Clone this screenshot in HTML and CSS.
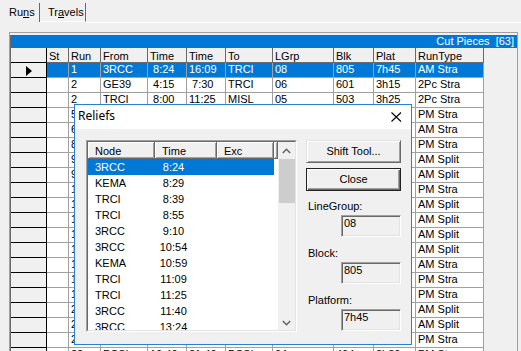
FILE: index.html
```html
<!DOCTYPE html>
<html>
<head>
<meta charset="utf-8">
<link rel="stylesheet" href="styles.css">
</head>
<body>
<div class="app">
  <div class="tabs">
    <div class="tab sel">Ru<u>n</u>s</div>
    <div class="tab">Tr<u>a</u>vels</div>
    <div class="tab-fill"></div>
  </div>
  <div class="frame">
    <div class="grid">
      <div class="cap">Cut Pieces&nbsp;&nbsp;[63]</div>
      <div class="gr gh">
        <div class="rh"></div><div class="st">St</div><div class="run">Run</div><div class="from">From</div><div class="t1">Time</div><div class="t2">Time</div><div class="to">To</div><div class="lg">LGrp</div><div class="blk">Blk</div><div class="plat">Plat</div><div class="rt">RunType</div>
      </div>
      <div class="gr sel">
        <div class="rh"><svg width="7" height="10" viewBox="0 0 7 10"><polygon points="0,0 6,5 0,10" fill="#000"/></svg></div><div class="st"></div><div class="run">1</div><div class="from">3RCC</div><div class="t1">&nbsp;8:24</div><div class="t2">16:09</div><div class="to">TRCI</div><div class="lg">08</div><div class="blk">805</div><div class="plat">7h45</div><div class="rt">AM Stra</div>
      </div>
      <div class="gr"><div class="rh"></div><div class="st"></div><div class="run">2</div><div class="from">GE39</div><div class="t1">&nbsp;4:15</div><div class="t2">&nbsp;7:30</div><div class="to">TRCI</div><div class="lg">06</div><div class="blk">601</div><div class="plat">3h15</div><div class="rt">2Pc Stra</div></div>
      <div class="gr"><div class="rh"></div><div class="st"></div><div class="run">2</div><div class="from">TRCI</div><div class="t1">&nbsp;8:00</div><div class="t2">11:25</div><div class="to">MISL</div><div class="lg">05</div><div class="blk">503</div><div class="plat">3h25</div><div class="rt">2Pc Stra</div></div>
      <div class="gr"><div class="rh"></div><div class="st"></div><div class="run">5</div><div class="from">TRCI</div><div class="t1">14:10</div><div class="t2">22:05</div><div class="to">TRCI</div><div class="lg">08</div><div class="blk">812</div><div class="plat">7h55</div><div class="rt">PM Stra</div></div>
      <div class="gr"><div class="rh"></div><div class="st"></div><div class="run">6</div><div class="from">3RCC</div><div class="t1">&nbsp;5:02</div><div class="t2">13:00</div><div class="to">3RCC</div><div class="lg">06</div><div class="blk">604</div><div class="plat">7h58</div><div class="rt">AM Stra</div></div>
      <div class="gr"><div class="rh"></div><div class="st"></div><div class="run">8</div><div class="from">KEMA</div><div class="t1">14:32</div><div class="t2">22:30</div><div class="to">TRCI</div><div class="lg">05</div><div class="blk">507</div><div class="plat">7h58</div><div class="rt">PM Stra</div></div>
      <div class="gr"><div class="rh"></div><div class="st"></div><div class="run">9</div><div class="from">3RCC</div><div class="t1">&nbsp;5:40</div><div class="t2">18:10</div><div class="to">KEMA</div><div class="lg">08</div><div class="blk">803</div><div class="plat">7h50</div><div class="rt">AM Split</div></div>
      <div class="gr"><div class="rh"></div><div class="st"></div><div class="run">9</div><div class="from">TRCI</div><div class="t1">&nbsp;6:12</div><div class="t2">17:45</div><div class="to">TRCI</div><div class="lg">06</div><div class="blk">602</div><div class="plat">7h40</div><div class="rt">AM Split</div></div>
      <div class="gr"><div class="rh"></div><div class="st"></div><div class="run">10</div><div class="from">GE39</div><div class="t1">15:20</div><div class="t2">23:18</div><div class="to">TRCI</div><div class="lg">05</div><div class="blk">505</div><div class="plat">7h58</div><div class="rt">PM Stra</div></div>
      <div class="gr"><div class="rh"></div><div class="st"></div><div class="run">11</div><div class="from">3RCC</div><div class="t1">&nbsp;6:05</div><div class="t2">18:30</div><div class="to">3RCC</div><div class="lg">08</div><div class="blk">806</div><div class="plat">7h45</div><div class="rt">AM Split</div></div>
      <div class="gr"><div class="rh"></div><div class="st"></div><div class="run">12</div><div class="from">KEMA</div><div class="t1">&nbsp;6:20</div><div class="t2">18:44</div><div class="to">KEMA</div><div class="lg">06</div><div class="blk">605</div><div class="plat">7h36</div><div class="rt">AM Split</div></div>
      <div class="gr"><div class="rh"></div><div class="st"></div><div class="run">13</div><div class="from">TRCI</div><div class="t1">&nbsp;6:35</div><div class="t2">19:02</div><div class="to">TRCI</div><div class="lg">05</div><div class="blk">506</div><div class="plat">7h42</div><div class="rt">AM Split</div></div>
      <div class="gr"><div class="rh"></div><div class="st"></div><div class="run">14</div><div class="from">3RCC</div><div class="t1">&nbsp;6:50</div><div class="t2">19:15</div><div class="to">3RCC</div><div class="lg">08</div><div class="blk">807</div><div class="plat">7h40</div><div class="rt">AM Split</div></div>
      <div class="gr"><div class="rh"></div><div class="st"></div><div class="run">15</div><div class="from">GE39</div><div class="t1">&nbsp;7:05</div><div class="t2">15:00</div><div class="to">TRCI</div><div class="lg">06</div><div class="blk">606</div><div class="plat">7h55</div><div class="rt">AM Stra</div></div>
      <div class="gr"><div class="rh"></div><div class="st"></div><div class="run">16</div><div class="from">TRCI</div><div class="t1">14:45</div><div class="t2">22:40</div><div class="to">3RCC</div><div class="lg">05</div><div class="blk">508</div><div class="plat">7h55</div><div class="rt">PM Stra</div></div>
      <div class="gr"><div class="rh"></div><div class="st"></div><div class="run">17</div><div class="from">KEMA</div><div class="t1">15:05</div><div class="t2">23:00</div><div class="to">KEMA</div><div class="lg">08</div><div class="blk">808</div><div class="plat">7h55</div><div class="rt">PM Stra</div></div>
      <div class="gr"><div class="rh"></div><div class="st"></div><div class="run">20</div><div class="from">3RCC</div><div class="t1">&nbsp;7:20</div><div class="t2">19:40</div><div class="to">TRCI</div><div class="lg">06</div><div class="blk">607</div><div class="plat">7h35</div><div class="rt">AM Split</div></div>
      <div class="gr"><div class="rh"></div><div class="st"></div><div class="run">21</div><div class="from">TRCI</div><div class="t1">&nbsp;7:35</div><div class="t2">19:55</div><div class="to">3RCC</div><div class="lg">05</div><div class="blk">509</div><div class="plat">7h40</div><div class="rt">AM Split</div></div>
      <div class="gr"><div class="rh"></div><div class="st"></div><div class="run">22</div><div class="from">KEMA</div><div class="t1">15:30</div><div class="t2">23:25</div><div class="to">TRCI</div><div class="lg">08</div><div class="blk">809</div><div class="plat">7h55</div><div class="rt">PM Stra</div></div>
      <div class="gr"><div class="rh"></div><div class="st"></div><div class="run">22</div><div class="from">PCSL</div><div class="t1">10:40</div><div class="t2">21:40</div><div class="to">PCSL</div><div class="lg">04</div><div class="blk">404</div><div class="plat">3h30</div><div class="rt">PM Stra</div></div>
    </div>
  </div>

  <div class="dialog">
    <div class="dlg-title">
      <span>Reliefs</span>
      <svg class="xbtn" width="11" height="10" viewBox="0 0 11 10"><path d="M0.5 0.5 L10 9.5 M10 0.5 L0.5 9.5" stroke="#000" stroke-width="1.1" fill="none"/></svg>
    </div>
    <div class="dlg-body">
      <div class="lv">
        <div class="lv-in">
          <div class="lv-main">
            <div class="lv-head">
              <div class="lh c-node">Node</div><div class="lh c-time">Time</div><div class="lh c-exc">Exc</div><div class="lh c-fill"></div>
            </div>
            <div class="lv-row sel"><span class="n">3RCC</span><span class="t">8:24</span></div>
            <div class="lv-row"><span class="n">KEMA</span><span class="t">8:29</span></div>
            <div class="lv-row"><span class="n">TRCI</span><span class="t">8:39</span></div>
            <div class="lv-row"><span class="n">TRCI</span><span class="t">8:55</span></div>
            <div class="lv-row"><span class="n">3RCC</span><span class="t">9:10</span></div>
            <div class="lv-row"><span class="n">3RCC</span><span class="t">10:54</span></div>
            <div class="lv-row"><span class="n">KEMA</span><span class="t">10:59</span></div>
            <div class="lv-row"><span class="n">TRCI</span><span class="t">11:09</span></div>
            <div class="lv-row"><span class="n">TRCI</span><span class="t">11:25</span></div>
            <div class="lv-row"><span class="n">3RCC</span><span class="t">11:40</span></div>
            <div class="lv-row"><span class="n">3RCC</span><span class="t">13:24</span></div>
            <div class="lv-row"><span class="n">KEMA</span><span class="t">13:29</span></div>
          </div>
          <div class="vscroll">
            <div class="sb-btn"><svg width="9" height="6" viewBox="0 0 9 6"><polyline points="0.8,5 4.5,1.2 8.2,5" fill="none" stroke="#606060" stroke-width="1.4"/></svg></div>
            <div class="sb-thumb"></div>
            <div class="sb-track"></div>
            <div class="sb-btn dn"><svg width="9" height="6" viewBox="0 0 9 6"><polyline points="0.8,1 4.5,4.8 8.2,1" fill="none" stroke="#606060" stroke-width="1.4"/></svg></div>
          </div>
        </div>
      </div>
      <div class="side">
        <div class="btn">Shift Tool...</div>
        <div class="btn def">Close</div>
        <div class="lbl first">LineGroup:</div>
        <div class="edit">08</div>
        <div class="lbl">Block:</div>
        <div class="edit">805</div>
        <div class="lbl">Platform:</div>
        <div class="edit">7h45</div>
      </div>
    </div>
  </div>
</div>
</body>
</html>
```

FILE: styles.css
```css
html, body {
  margin: 0;
  padding: 0;
  background: #f0f0f0;
}
body {
  font-family: "Liberation Sans", Arial, sans-serif;
  font-size: 11px;
  color: #000;
  overflow: hidden;
}
.app {
  position: relative;
  width: 521px;
  height: 351px;
  overflow: hidden;
  background: #f0f0f0;
}

/* tabs */
.tabs {
  display: flex;
  align-items: flex-start;
  height: 22px;
  padding-top: 3px;
  box-sizing: border-box;
}
.tab {
  box-sizing: border-box;
  height: 19px;
  line-height: 13px;
  padding-top: 3px;
  border-right: 1px solid #696969;
  border-bottom: 1px solid #fff;
  white-space: nowrap;
}
.tab.sel {
  width: 40px;
  padding-left: 9px;
  border-bottom: none;
}
.tab:not(.sel) {
  width: 46px;
  padding-left: 8px;
}
.tab-fill {
  flex: 1;
  height: 19px;
  border-bottom: 1px solid #fff;
}
.tab u {
  text-decoration: underline;
  text-underline-offset: 1px;
}

/* grid frame */
.frame {
  margin-top: 10px;
  margin-left: 9px;
  width: 509px;
  box-sizing: border-box;
  border: 1px solid #a0a0a0;
  border-bottom: none;
  padding-top: 2px;
  height: 400px;
}
.grid {
  border-left: 1px solid #696969;
  height: 100%;
}
.cap {
  height: 13px;
  line-height: 13px;
  background: #0078d7;
  color: #fff;
  text-align: right;
  padding-right: 3px;
  white-space: nowrap;
}
.gr {
  display: flex;
  height: 15px;
}
.gr > div {
  box-sizing: border-box;
  height: 15px;
  flex: none;
  background: #fff;
  border-right: 1px solid #a0a0a0;
  border-bottom: 1px solid #a0a0a0;
  padding-left: 2px;
  line-height: 13px;
  white-space: nowrap;
  overflow: hidden;
}
.gr > .rh {
  width: 36px;
  background: #f0f0f0;
  border-color: #000;
  padding: 0;
  display: flex;
  align-items: center;
  justify-content: center;
}
.gr > .rh svg { margin-left: 1px; margin-top: 1px; }
.gr > .st { width: 22px; }
.gr > .run { width: 32px; }
.gr > .from { width: 47px; }
.gr > .t1 { width: 39px; }
.gr > .t2 { width: 39px; }
.gr > .to { width: 47px; }
.gr > .lg { width: 61px; }
.gr > .blk { width: 40px; }
.gr > .plat { width: 42px; }
.gr > .rt { width: 68px; }

.gh > div {
  background: #f0f0f0;
  border-color: #696969;
  padding-top: 2px;
  line-height: 12px;
}
.gh > .rh { border-color: #000; }

.gr.sel > div:not(.rh) {
  background: #0078d7;
  color: #fff;
}

/* dialog */
.dialog {
  position: absolute;
  left: 74px;
  top: 104px;
  width: 338px;
  height: 241px;
  box-sizing: border-box;
  border: 1px solid #2b7fd3;
  background: #f0f0f0;
}
.dlg-title {
  height: 24px;
  background: #fff;
  display: flex;
  align-items: flex-start;
  justify-content: space-between;
  padding-left: 3px;
  font-family: "Noto Sans", "Open Sans", sans-serif;
  font-size: 12px;
  line-height: 21px;
}
.xbtn {
  margin-top: 7px;
  margin-right: 9px;
}
.dlg-body {
  display: flex;
  padding: 11px 10px 0 11px;
  gap: 9px;
}

/* list view */
.lv {
  width: 211px;
  height: 192px;
  box-sizing: border-box;
  border: 1px solid;
  border-color: #a0a0a0 #fff #fff #a0a0a0;
  flex: none;
}
.lv-in {
  height: 100%;
  box-sizing: border-box;
  border: 1px solid;
  border-color: #696969 #e3e3e3 #e3e3e3 #696969;
  background: #fff;
  display: flex;
  overflow: hidden;
}
.lv-main {
  flex: 1;
  overflow: hidden;
}
.lv-head {
  display: flex;
  height: 17px;
}
.lh {
  box-sizing: border-box;
  height: 17px;
  background: #f0f0f0;
  border-right: 1px solid #696969;
  border-bottom: 1px solid #696969;
  box-shadow: inset 1px 1px #fff, inset -1px -1px #a0a0a0;
  padding-left: 7px;
  padding-top: 2px;
  line-height: 14px;
  white-space: nowrap;
  flex: none;
}
.c-node { width: 67px; }
.c-time { width: 62px; }
.c-exc { width: 57px; }
.c-fill { flex: 1; padding: 0; }
.lv-row {
  display: flex;
  width: 186px;
  height: 16px;
  line-height: 16px;
  white-space: nowrap;
}
.lv-row .n {
  width: 67px;
  padding-left: 7px;
  box-sizing: border-box;
}
.lv-row .t {
  width: 37px;
  text-align: center;
}
.lv-row.sel {
  background: #0078d7;
  color: #fff;
}
.vscroll {
  width: 17px;
  flex: none;
  display: flex;
  flex-direction: column;
  background: #f0f0f0;
}
.sb-btn {
  height: 17px;
  display: flex;
  align-items: center;
  justify-content: center;
  flex: none;
}
.sb-btn.dn { align-items: flex-end; padding-bottom: 4px; box-sizing: border-box; }
.sb-thumb {
  height: 44px;
  margin-left: 1px;
  background: #cdcdcd;
  flex: none;
}
.sb-track { flex: 1; }

/* side column */
.side {
  width: 95px;
  display: flex;
  flex-direction: column;
  flex: none;
}
.btn {
  box-sizing: border-box;
  height: 23px;
  line-height: 21px;
  text-align: center;
  background: #f0f0f0;
  border: 1px solid;
  border-color: #e3e3e3 #696969 #696969 #e3e3e3;
  box-shadow: inset 1px 1px #fff, inset -1px -1px #a0a0a0;
}
.btn.def {
  margin-top: 5px;
  border-color: #222;
  box-shadow: inset 1px 1px #fff, inset -1px -1px #696969, inset -2px -2px #a0a0a0;
}
.lbl {
  margin-top: 10px;
  padding-left: 2px;
  line-height: 13px;
  height: 13px;
}
.lbl.first { margin-top: 9px; }
.edit {
  margin-top: 2px;
  align-self: flex-end;
  width: 60px;
  height: 22px;
  box-sizing: border-box;
  border: 1px solid;
  border-color: #a0a0a0 #fff #fff #a0a0a0;
  box-shadow: inset 1px 1px #696969, inset -1px -1px #e3e3e3;
  padding: 1px 0 0 2px;
  line-height: 13px;
  background: #f0f0f0;
}
```
